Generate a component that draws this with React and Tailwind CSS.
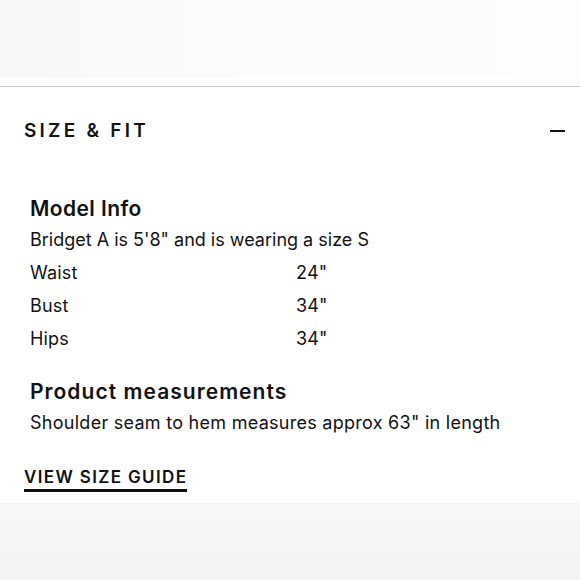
import React from 'react';

const rows = [
  { label: 'Waist', value: '24"' },
  { label: 'Bust', value: '34"' },
  { label: 'Hips', value: '34"' },
];

export default function App() {
  return (
    <div className="w-[580px] h-[580px] bg-white flex flex-col text-[#111] font-['Inter',sans-serif] overflow-hidden">
      <div className="h-[78px] bg-gradient-to-r from-[#f7f7f7] via-[#fcfcfc] to-[#fdfdfd]" />
      <div className="h-[8px] bg-white" />
      <div className="border-t border-[#c8c8c8]" />

      <div className="flex items-center justify-between pl-[24px] pr-[15px] pt-[32px]">
        <h2 className="text-[19px] font-semibold tracking-[0.17em] leading-[24px]">SIZE &amp; FIT</h2>
        <span className="block w-[15px] h-[2px] bg-[#111]" />
      </div>

      <div className="pl-[30px] pt-[54px]">
        <h3 className="text-[21px] font-semibold tracking-[0.02em] leading-[24px]">Model Info</h3>
        <p className="text-[18px] leading-[24px] mt-[7px]">Bridget A is 5'8" and is wearing a size S</p>
        <div className="flex flex-col gap-[9px] mt-[9px]">
          {rows.map((r) => (
            <div key={r.label} className="grid grid-cols-[266px_1fr] text-[18px] tracking-[0.01em] leading-[24px]">
              <span>{r.label}</span>
              <span>{r.value}</span>
            </div>
          ))}
        </div>

        <h3 className="text-[21px] font-semibold tracking-[0.05em] leading-[24px] mt-[29px]">Product measurements</h3>
        <p className="text-[18px] tracking-[0.015em] leading-[24px] mt-[7px]">Shoulder seam to hem measures approx 63" in length</p>
      </div>

      <div className="pl-[24px] pt-[30px]">
        <a className="inline-block text-[17px] font-semibold tracking-[0.08em] leading-[22px] border-b-[3px] border-[#111] pb-[1px]">VIEW SIZE GUIDE</a>
      </div>

      <div className="mt-[11px] flex-1 bg-gradient-to-b from-[#f6f6f6] to-[#f2f2f2]" />
    </div>
  );
}
